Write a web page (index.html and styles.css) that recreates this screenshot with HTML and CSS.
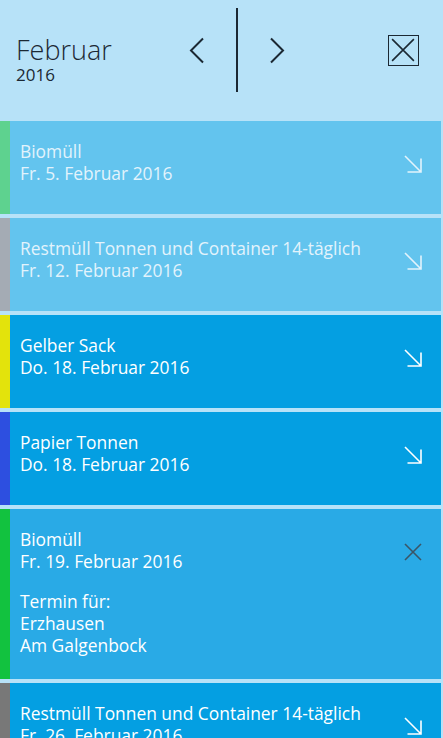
FILE: index.html
```html
<!DOCTYPE html>
<html lang="de">
<head>
    <meta charset="UTF-8">
    <meta name="viewport" content="width=device-width, initial-scale=1.0">
    <title>Abfallkalender</title>
    <link rel="stylesheet" href="styles.css">
</head>
<body>
    <div id="header">
        <div class="month">
            <div class="month-name">Februar</div>
            <div class="month-year">2016</div>
        </div>
        <div class="nav">
            <div class="nav-btn">
                <svg width="16" height="27" viewBox="0 0 16 27"><polyline points="14,1.5 2,13.5 14,25.5" fill="none" stroke="#1b2833" stroke-width="2"/></svg>
            </div>
            <div class="nav-sep"></div>
            <div class="nav-btn">
                <svg width="16" height="27" viewBox="0 0 16 27"><polyline points="2,1.5 14,13.5 2,25.5" fill="none" stroke="#1b2833" stroke-width="2"/></svg>
            </div>
        </div>
        <div class="close-box">
            <svg width="27" height="27" viewBox="0 0 27 27"><path d="M3 3 L24 24 M24 3 L3 24" stroke="#1b2833" stroke-width="1.5"/></svg>
        </div>
    </div>

    <div id="list">
        <div class="entry past bar-bio-light">
            <div class="text">
                <div>Biomüll</div>
                <div>Fr. 5. Februar 2016</div>
            </div>
            <div class="icon"><svg width="20" height="20" viewBox="0 0 20 20"><path d="M2 2 L18 18 M4.5 18 L18 18 L18 4.5" fill="none" stroke="currentColor" stroke-width="1.6"/></svg></div>
        </div>
        <div class="entry past bar-rest-light">
            <div class="text">
                <div>Restmüll Tonnen und Container 14-täglich</div>
                <div>Fr. 12. Februar 2016</div>
            </div>
            <div class="icon"><svg width="20" height="20" viewBox="0 0 20 20"><path d="M2 2 L18 18 M4.5 18 L18 18 L18 4.5" fill="none" stroke="currentColor" stroke-width="1.6"/></svg></div>
        </div>
        <div class="entry bar-gelb">
            <div class="text">
                <div>Gelber Sack</div>
                <div>Do. 18. Februar 2016</div>
            </div>
            <div class="icon"><svg width="20" height="20" viewBox="0 0 20 20"><path d="M2 2 L18 18 M4.5 18 L18 18 L18 4.5" fill="none" stroke="currentColor" stroke-width="1.6"/></svg></div>
        </div>
        <div class="entry bar-papier">
            <div class="text">
                <div>Papier Tonnen</div>
                <div>Do. 18. Februar 2016</div>
            </div>
            <div class="icon"><svg width="20" height="20" viewBox="0 0 20 20"><path d="M2 2 L18 18 M4.5 18 L18 18 L18 4.5" fill="none" stroke="currentColor" stroke-width="1.6"/></svg></div>
        </div>
        <div class="entry open bar-bio">
            <div class="text">
                <div>Biomüll</div>
                <div>Fr. 19. Februar 2016</div>
                <div class="details">
                    <div>Termin für:</div>
                    <div>Erzhausen</div>
                    <div>Am Galgenbock</div>
                </div>
            </div>
            <div class="icon icon-close"><svg width="20" height="20" viewBox="0 0 20 20"><path d="M2 2 L18 18 M18 2 L2 18" fill="none" stroke="currentColor" stroke-width="1.6"/></svg></div>
        </div>
        <div class="entry bar-rest">
            <div class="text">
                <div>Restmüll Tonnen und Container 14-täglich</div>
                <div>Fr. 26. Februar 2016</div>
            </div>
            <div class="icon"><svg width="20" height="20" viewBox="0 0 20 20"><path d="M2 2 L18 18 M4.5 18 L18 18 L18 4.5" fill="none" stroke="currentColor" stroke-width="1.6"/></svg></div>
        </div>
    </div>
</body>
</html>
```

FILE: styles.css
```css
body {
    margin: 0;
    background: #b7e2f8;
    font-family: "Open Sans", "Noto Sans", sans-serif;
    color: #1b2833;
    overflow: hidden;
}

#header {
    display: flex;
    align-items: flex-start;
    height: 117px;
    margin-bottom: 4px;
}

.month {
    box-sizing: border-box;
    width: 177px;
    padding: 34px 0 0 16px;
}

.month-name {
    font-size: 27px;
    font-weight: 300;
    line-height: 31px;
}

.month-year {
    font-size: 17px;
    line-height: 20px;
}

.nav {
    display: flex;
    margin-top: 8px;
    height: 84px;
}

.nav-btn {
    width: 40px;
    display: flex;
    align-items: center;
    justify-content: center;
}

.nav-sep {
    width: 40px;
    display: flex;
    justify-content: center;
}

.nav-sep::before {
    content: "";
    width: 2px;
    background: #1b2833;
}

.close-box {
    box-sizing: border-box;
    width: 31px;
    height: 31px;
    margin: 35px 24px 0 auto;
    border: 1.5px solid #1b2833;
}

.close-box svg {
    display: block;
    width: 28px;
    height: 28px;
}

.entry {
    box-sizing: border-box;
    display: flex;
    min-height: 93px;
    margin: 0 2px 4px 0;
    padding: 19px 18px 0 10px;
    border-left: 10px solid;
    background: #049fe2;
    color: #ffffff;
    font-size: 17.4px;
    line-height: 22px;
}

.entry.past {
    background: #63c4ee;
    color: #e2f3fc;
}

.entry.open {
    background: #29aae6;
    padding-bottom: 23px;
}

.text {
    flex: 1;
}

.details {
    margin-top: 18px;
}

.icon {
    width: 20px;
    height: 20px;
    margin-top: 14px;
}

.icon svg {
    display: block;
}

.icon-close {
    color: #3b5566;
}

.bar-bio-light { border-left-color: #5ed28f; }
.bar-rest-light { border-left-color: #a4abb4; }
.bar-gelb { border-left-color: #e3e30c; }
.bar-papier { border-left-color: #2d4fe0; }
.bar-bio { border-left-color: #12c23f; }
.bar-rest { border-left-color: #787878; }
```
